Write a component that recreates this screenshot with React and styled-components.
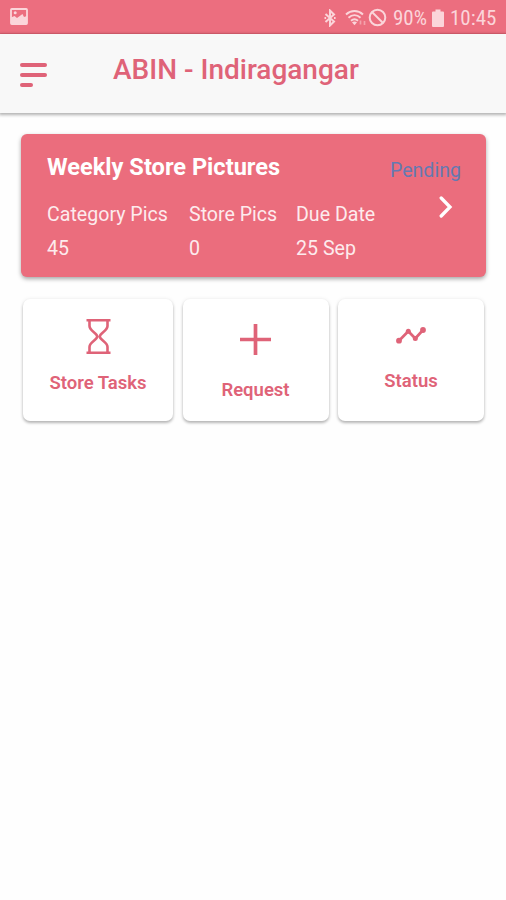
import React from "react";
import styled, { createGlobalStyle } from "styled-components";

const accent = "#df6378";

const GlobalStyle = createGlobalStyle`
  * {
    box-sizing: border-box;
  }

  body {
    margin: 0;
    background: #fefefe;
    font-family: Roboto, "Liberation Sans", sans-serif;
  }
`;

const Screen = styled.div`
  width: 506px;
  height: 900px;
  overflow: hidden;
`;

const StatusBar = styled.div`
  display: flex;
  align-items: center;
  height: 34px;
  padding: 0 10px;
  background: #ec6e7f;
  border-bottom: 1px solid #e56475;
  color: #fbd5da;

  svg {
    display: block;
    flex: none;
  }
`;

const StatusIcons = styled.div`
  display: flex;
  align-items: center;
  margin-left: auto;
  padding-top: 2px;
`;

const Signals = styled.div`
  display: flex;
  align-items: center;

  svg:nth-child(2) {
    margin: 0 1px 0 9px;
  }
`;

const StatusText = styled.div`
  width: ${(props) => props.$width}px;
  margin-left: 6px;
  font-family: "Roboto Condensed", Roboto, sans-serif;
  font-size: 21px;
  line-height: 24px;
  white-space: nowrap;

  & + svg {
    margin-left: 5px;
  }
`;

const Header = styled.header`
  display: flex;
  height: 79px;
  padding-left: 20px;
  background: #f8f8f8;
  box-shadow: 0 1px 3px 1px rgba(0, 0, 0, 0.3);
`;

const MenuButton = styled.div`
  display: flex;
  flex-direction: column;
  gap: 6px;
  width: 93px;
  padding-top: 29px;
`;

const MenuLine = styled.span`
  width: ${(props) => (props.$short ? 13 : 27)}px;
  height: 4px;
  border-radius: 2px;
  background: ${accent};
`;

const Title = styled.h1`
  margin: 20px 0 0;
  color: ${accent};
  font-size: 28px;
  font-weight: 500;
  line-height: 32px;
  white-space: nowrap;
`;

const Content = styled.main`
  padding: 21px 20px 0 21px;
`;

const Card = styled.section`
  display: flex;
  justify-content: space-between;
  height: 143px;
  padding: 20px 25px 0 26px;
  border-radius: 6px;
  background: #eb6d7d;
  box-shadow: 0 2px 4px rgba(0, 0, 0, 0.35);
  color: #fdebed;
  font-size: 19.6px;
  white-space: nowrap;
`;

const CardTitle = styled.h2`
  margin: 0;
  color: #fff;
  font-size: 23.6px;
  font-weight: 700;
  line-height: 27px;
`;

const Stats = styled.div`
  display: grid;
  grid-template-columns: 142px 107px auto;
  margin-top: 17px;
  line-height: 34px;
`;

const CardSide = styled.div`
  display: flex;
  flex-direction: column;
  align-items: flex-end;

  svg {
    margin: 13px 7px 0 0;
  }
`;

const Pending = styled.div`
  margin-top: 4px;
  color: #6579b1;
  line-height: 25px;
`;

const Tiles = styled.nav`
  display: grid;
  grid-template-columns: 150px 146px 146px;
  column-gap: 9.5px;
  margin: 22px 0 0 2px;
`;

const Tile = styled.div`
  display: flex;
  flex-direction: column;
  align-items: center;
  height: 122px;
  padding-top: ${(props) => props.$top}px;
  border-radius: 7px;
  background: #fff;
  box-shadow: 0 2px 3px rgba(0, 0, 0, 0.27), 0 0 4px rgba(0, 0, 0, 0.07);
  color: ${accent};
`;

const TileLabel = styled.div`
  margin-top: ${(props) => props.$gap}px;
  font-size: 18.5px;
  font-weight: 600;
  line-height: 22px;
`;

const PictureIcon = () => (
  <svg width="18" height="17" viewBox="0 0 18 17">
    <rect x="1" y="1" width="16" height="15" rx="0.8" fill="none" stroke="currentColor" strokeWidth="1.8" />
    <path d="M1 9.500L4.500 8l2.500 2 5.500-4 1.500 3 3-1V16H1z" fill="currentColor" />
    <circle cx="5.200" cy="4.800" r="1.500" fill="currentColor" />
  </svg>
);

const BluetoothIcon = () => (
  <svg width="12" height="18" viewBox="0 0 12 18" fill="none" stroke="currentColor" strokeWidth="2">
    <path d="M1.500 5l8.500 7.500-4 4V1.500l4 4L1.500 13" />
    <path d="M0.500 9h1.600M10 9h1.600" />
  </svg>
);

const WifiIcon = () => (
  <svg width="22" height="18" viewBox="0 0 22 18" fill="none" stroke="currentColor" strokeWidth="1.9">
    <path d="M1 5.500c5-4.600 12-4.600 17 0M3.500 8.700c3.600-3.300 8.400-3.300 12 0M6 11.800c2.200-2 4.800-2 7 0" />
    <path d="M7 13.200c1.200-1 3.800-1 5 0l-2.500 3z" fill="currentColor" stroke="none" />
    <path d="M15.500 11.500v4M19.500 12v4" strokeWidth="1.700" opacity="0.5" />
  </svg>
);

const BlockedIcon = () => (
  <svg width="19" height="19" viewBox="0 0 19 19" fill="none" stroke="currentColor" strokeWidth="2">
    <circle cx="9.500" cy="9.500" r="7.800" />
    <path d="M4 4l11 11" />
  </svg>
);

const BatteryIcon = () => (
  <svg width="12" height="18" viewBox="0 0 12 18" fill="currentColor">
    <path d="M3.500 0.500h5v2H11q1 0 1 1V17q0 1-1 1H1q-1 0-1-1V3.500q0-1 1-1h2.500z" />
  </svg>
);

const ChevronIcon = () => (
  <svg width="15" height="22" viewBox="0 0 15 22">
    <path d="M2.200 2L11 11l-8.800 9" fill="none" stroke="#fff" strokeWidth="3.300" strokeLinecap="round" />
  </svg>
);

const HourglassIcon = () => (
  <svg width="25" height="35" viewBox="0 0 25 35" fill="none" stroke="currentColor" strokeWidth="2.600">
    <path d="M0.500 1.300h24M0.500 33.700h24" strokeWidth="2.600" />
    <path d="M3.500 1.500V7c0 5 7.700 7 7.700 10.500S3.500 23 3.500 28v5.500M21.500 1.500V7c0 5-7.700 7-7.700 10.500S21.500 23 21.500 28v5.500" />
  </svg>
);

const PlusIcon = () => (
  <svg width="31" height="31" viewBox="0 0 31 31">
    <path d="M15.500 0v31M0 15.500h31" stroke="currentColor" strokeWidth="3.700" />
  </svg>
);

const StatusIcon = () => (
  <svg width="30" height="17" viewBox="0 0 30 17" fill="currentColor">
    <path d="M3 13.700l9.300-9.500 7 7.300L27 3" fill="none" stroke="currentColor" strokeWidth="2.700" />
    <circle cx="3" cy="13.700" r="2.900" />
    <circle cx="12.300" cy="4.200" r="2.500" />
    <circle cx="19.300" cy="11.500" r="2.500" />
    <circle cx="27" cy="3" r="2.900" />
  </svg>
);

const stats = [
  "Category Pics",
  "Store Pics",
  "Due Date",
  "45",
  "0",
  "25 Sep",
];

const App = () => (
  <Screen>
    <GlobalStyle />
    <StatusBar>
      <PictureIcon />
      <StatusIcons>
        <Signals>
          <BluetoothIcon />
          <WifiIcon />
          <BlockedIcon />
        </Signals>
        <StatusText $width={34}>90%</StatusText>
        <BatteryIcon />
        <StatusText $width={46}>10:45</StatusText>
      </StatusIcons>
    </StatusBar>
    <Header>
      <MenuButton>
        <MenuLine />
        <MenuLine />
        <MenuLine $short />
      </MenuButton>
      <Title>ABIN - Indiragangar</Title>
    </Header>
    <Content>
      <Card>
        <div>
          <CardTitle>Weekly Store Pictures</CardTitle>
          <Stats>
            {stats.map((text) => (
              <span key={text}>{text}</span>
            ))}
          </Stats>
        </div>
        <CardSide>
          <Pending>Pending</Pending>
          <ChevronIcon />
        </CardSide>
      </Card>
      <Tiles>
        <Tile $top={20}>
          <HourglassIcon />
          <TileLabel $gap={18}>Store Tasks</TileLabel>
        </Tile>
        <Tile $top={25}>
          <PlusIcon />
          <TileLabel $gap={24}>Request</TileLabel>
        </Tile>
        <Tile $top={28}>
          <StatusIcon />
          <TileLabel $gap={26}>Status</TileLabel>
        </Tile>
      </Tiles>
    </Content>
  </Screen>
);

export default App;
